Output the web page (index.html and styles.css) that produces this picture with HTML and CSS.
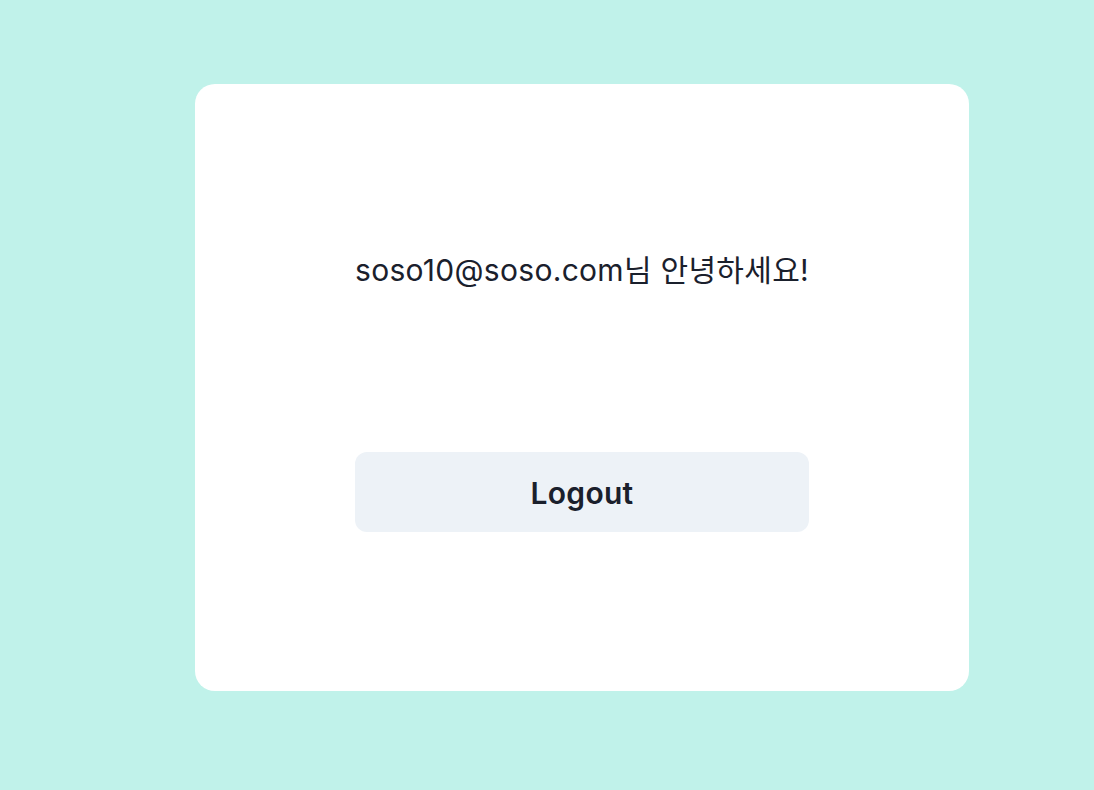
FILE: index.html
```html
<!DOCTYPE html>
<html lang="ko">
<head>
<meta charset="utf-8">
<link rel="stylesheet" href="styles.css">
</head>
<body>
<div class="page">
  <div class="card">
    <p class="greeting">soso10@soso.com님 안녕하세요!</p>
    <button class="logout">Logout</button>
  </div>
</div>
</body>
</html>
```
FILE: styles.css
```css
html, body {
  margin: 0;
  padding: 0;
  background: #c0f2ea;
  font-family: Inter, "Noto Sans CJK KR", sans-serif;
  color: #1a202c;
}
.page {
  padding: 84px 0 0 195px;
}
.card {
  box-sizing: border-box;
  width: 774px;
  height: 607px;
  background: #ffffff;
  border-radius: 20px;
  display: flex;
  flex-direction: column;
  align-items: center;
  padding-top: 169px;
}
.greeting {
  margin: 0;
  font-size: 30px;
  line-height: 34px;
  height: 34px;
  letter-spacing: 0.3px;
  white-space: nowrap;
}
.logout {
  margin-top: 165px;
  width: 454px;
  height: 80px;
  padding: 2px 0 0;
  border: none;
  border-radius: 12px;
  background: #edf2f7;
  color: #1a202c;
  font-family: Inter, sans-serif;
  font-weight: 600;
  font-size: 30px;
  letter-spacing: 0.3px;
}
```
